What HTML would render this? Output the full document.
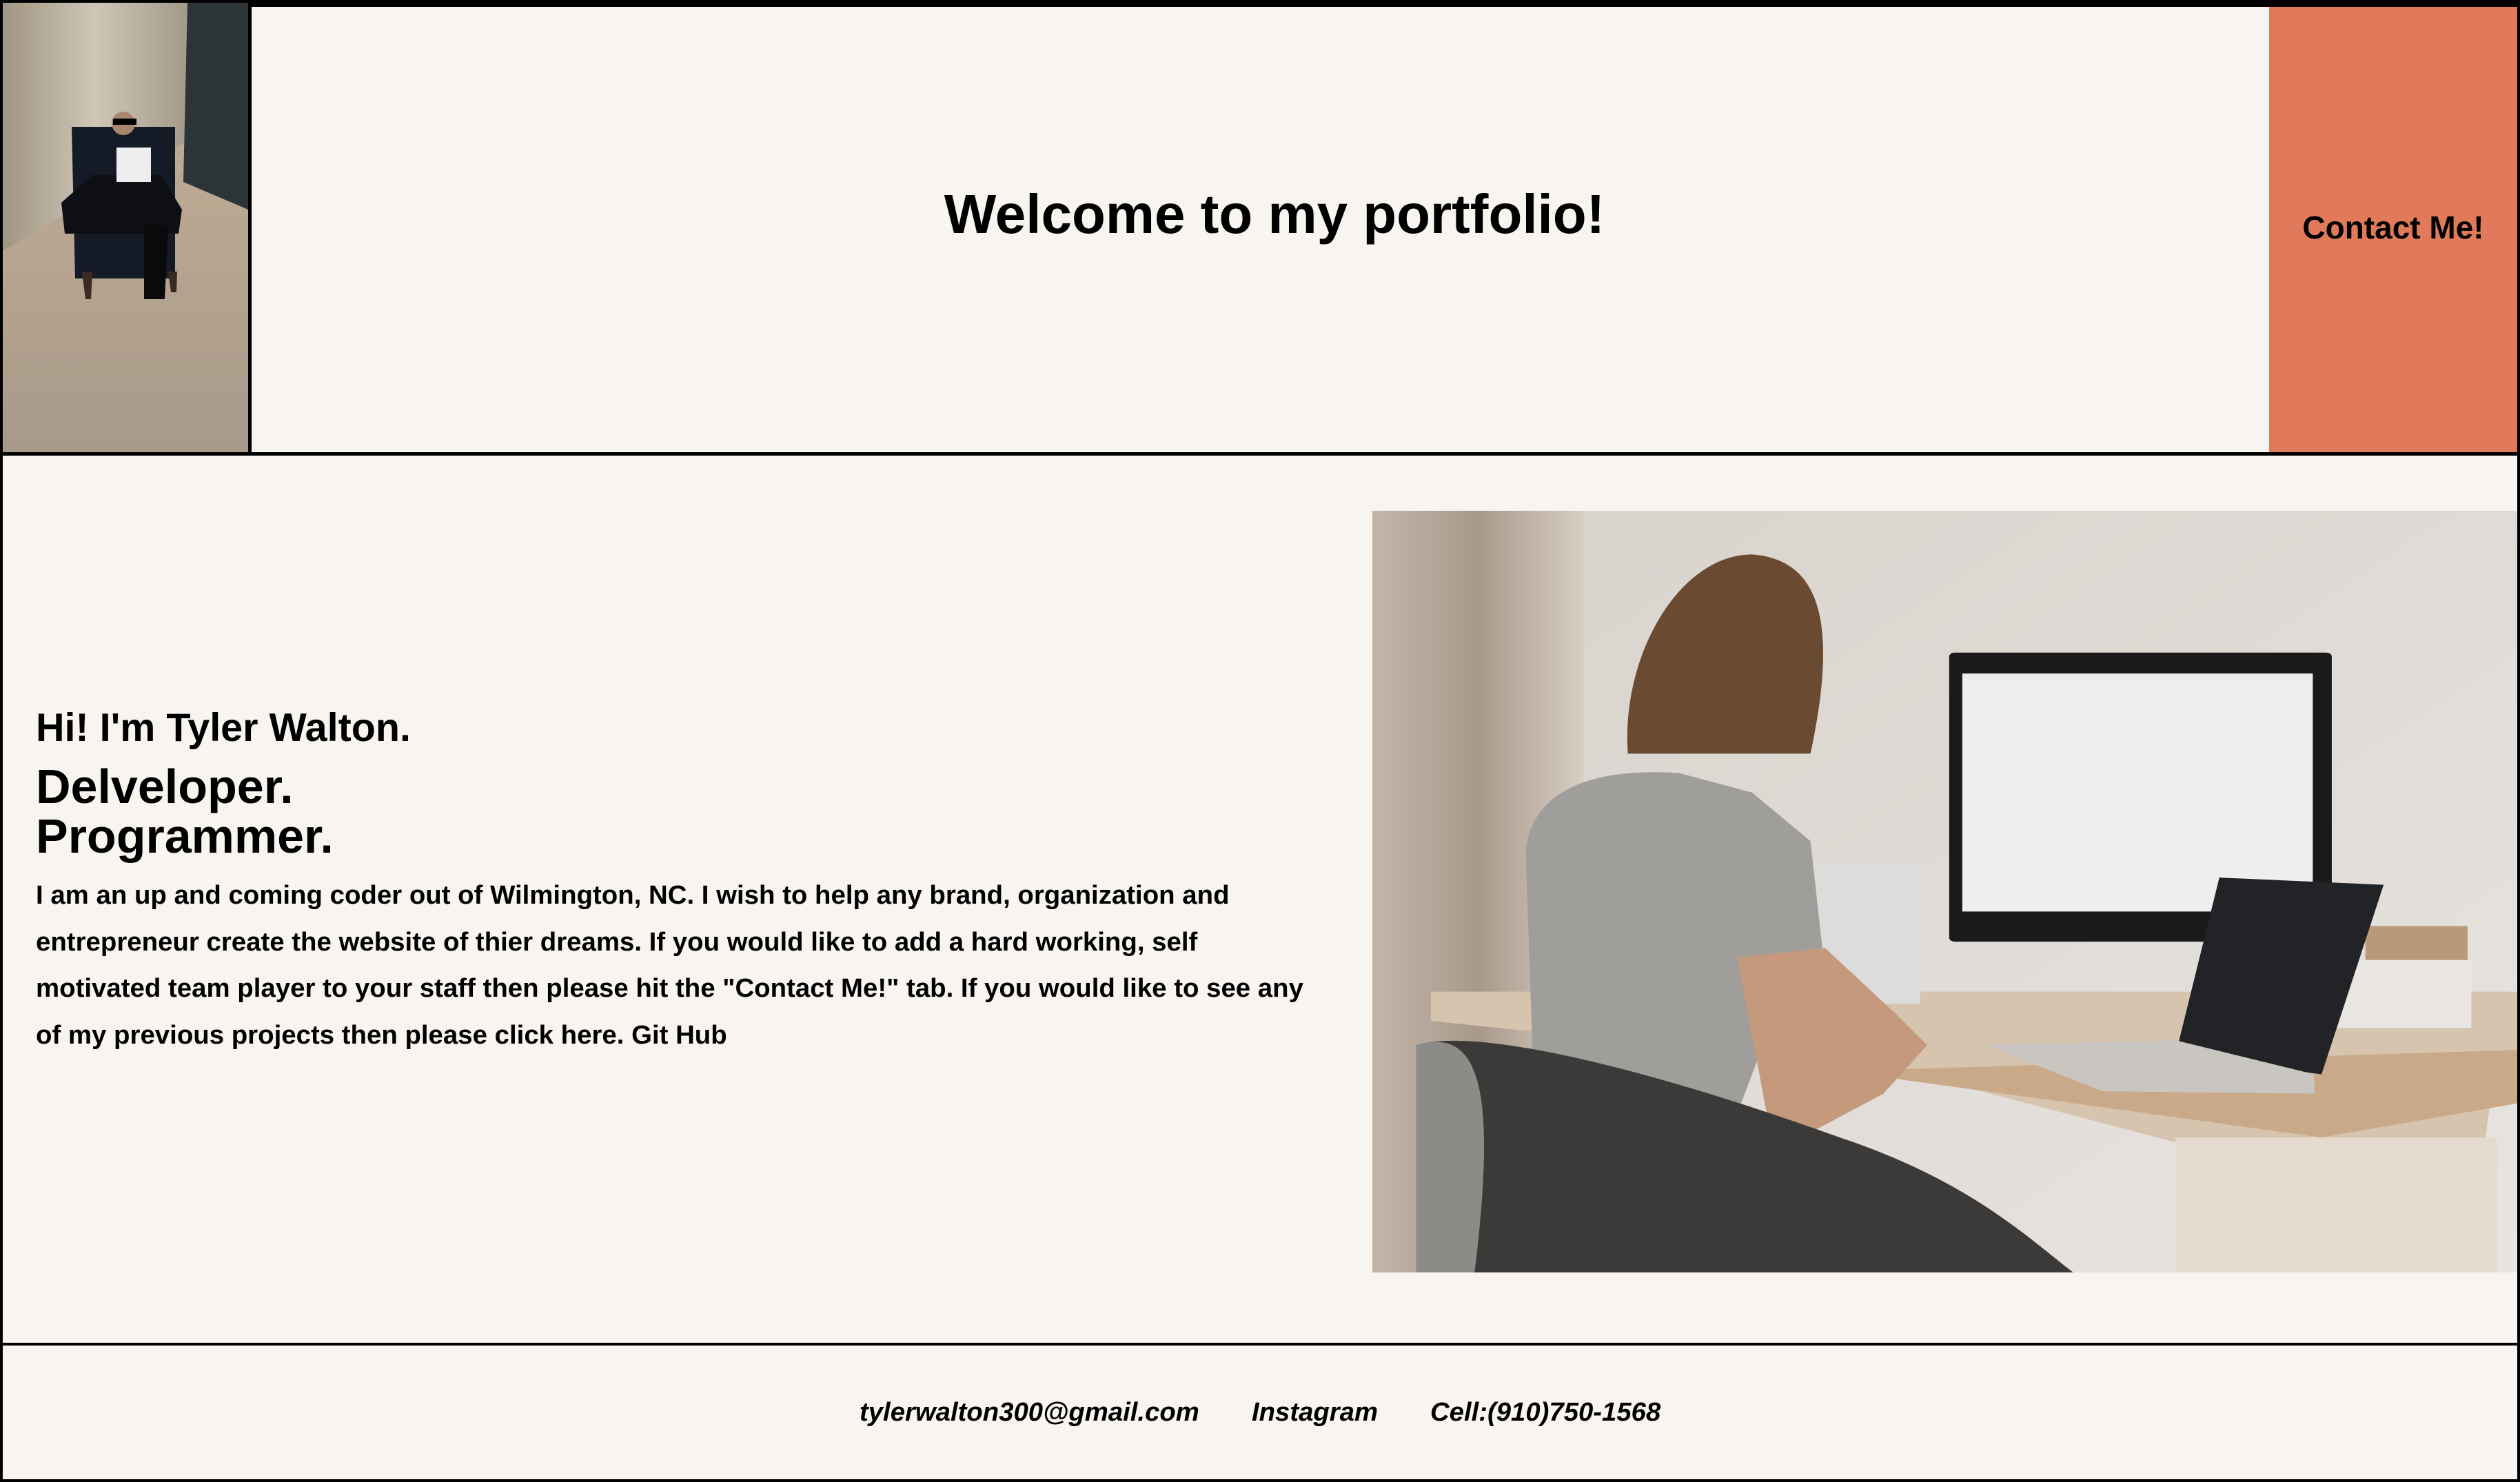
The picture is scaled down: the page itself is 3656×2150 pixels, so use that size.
<!DOCTYPE html>
<html><head><meta charset="utf-8"><style>
*{margin:0;padding:0;box-sizing:border-box}
body{width:3656px;height:2150px;background:#f8f4f0;position:relative;overflow:hidden;font-family:"Liberation Sans",Arial,sans-serif;font-weight:bold;color:#000}
.a{position:absolute}
.t{position:absolute;white-space:nowrap;line-height:1}
</style></head><body>
<div class="a" style="left:0;top:0;width:3656px;height:10px;background:#000"></div>
<div class="a" style="left:0;top:656px;width:3656px;height:5px;background:#000"></div>
<div class="a" style="left:0;top:1948px;width:3656px;height:4px;background:#000"></div>
<div class="a" style="left:0;top:2146px;width:3656px;height:4px;background:#000"></div>
<div class="a" style="left:0;top:0;width:4px;height:2150px;background:#000"></div>
<div class="a" style="left:3652px;top:0;width:4px;height:2150px;background:#000"></div>
<div class="a" style="left:360px;top:0;width:5px;height:660px;background:#000"></div>
<svg class="a" style="left:4px;top:4px" width="356" height="652" viewBox="0 0 356 652" preserveAspectRatio="none">
<defs><linearGradient id="w" x1="0" y1="0" x2="1" y2="0"><stop offset="0" stop-color="#a09582"/><stop offset=".5" stop-color="#cfc6b6"/><stop offset="1" stop-color="#a39a8a"/></linearGradient>
<linearGradient id="f" x1="0" y1="0" x2="0" y2="1"><stop offset="0" stop-color="#c8b397"/><stop offset="1" stop-color="#a8998a"/></linearGradient></defs>
<rect width="356" height="652" fill="url(#f)"/>
<path d="M0 0H268V200L0 360Z" fill="url(#w)"/>
<path d="M268 0H356V300L262 260Z" fill="#2c3438"/>
<path d="M100 180H250V400H105Z" fill="#141a26"/>
<path d="M85 290L130 250H230L260 300L255 335H90Z" fill="#0d0f14"/>
<path d="M165 210h50v50h-50z" fill="#eeeeee"/>
<circle cx="175" cy="175" r="17" fill="#a8866e"/>
<rect x="160" y="168" width="34" height="9" fill="#000"/>
<path d="M205 320L240 325L235 430H205Z" fill="#0a0a0a"/>
<path d="M115 390l5 40h8l2-40z M240 390l4 30h8l1-30z" fill="#3a2a22"/>
</svg>
<div class="t" style="left:0;width:3698px;text-align:center;top:271px;font-size:80px">Welcome to my portfolio!</div>
<div class="a" style="left:3292px;top:10px;width:360px;height:646px;background:#e07a5a"></div>
<div class="t" style="left:3292px;width:360px;text-align:center;top:307px;font-size:46px">Contact Me!</div>
<div class="t" style="left:52px;top:1028px;font-size:57.5px">Hi! I'm Tyler Walton.</div>
<div class="t" style="left:52px;top:1106px;font-size:70px">Delveloper.</div>
<div class="t" style="left:52px;top:1178px;font-size:70px">Programmer.</div>
<div class="a" style="left:52px;top:1265px;font-size:38.4px;line-height:67.6px;white-space:nowrap">I am an up and coming coder out of Wilmington, NC. I wish to help any brand, organization and<br>entrepreneur create the website of thier dreams. If you would like to add a hard working, self<br>motivated team player to your staff then please hit the "Contact Me!" tab. If you would like to see any<br>of my previous projects then please click here. Git Hub</div>
<svg class="a" style="left:1991px;top:741px" width="1661" height="1105" viewBox="0 0 1568 1568" preserveAspectRatio="none">
<defs><linearGradient id="wall" x1="0" y1="0" x2="1" y2="1"><stop offset="0" stop-color="#d8d2cc"/><stop offset="1" stop-color="#e8e4e0"/></linearGradient>
<linearGradient id="cur" x1="0" y1="0" x2="1" y2="0"><stop offset="0" stop-color="#c2b6aa"/><stop offset=".5" stop-color="#a8998a"/><stop offset="1" stop-color="#d8cec4"/></linearGradient></defs>
<rect width="1568" height="1568" fill="url(#wall)"/>
<rect width="290" height="1568" fill="url(#cur)"/>
<path d="M80 990H1568V1120L1530 1230L1500 1568H1120L1100 1300L720 1150L80 1050Z" fill="#d6c4ae"/>
<path d="M720 1150L1568 1110V1220L1300 1290L720 1170Z" fill="#c9a988"/>
<path d="M1100 1290h440v278h-440z" fill="#e4dacd"/>
<rect x="790" y="292" width="524" height="595" rx="8" fill="#1a1a1a"/>
<rect x="808" y="335" width="480" height="490" fill="#eeeeee"/>
<rect x="1360" y="855" width="140" height="70" fill="#b89a78"/>
<rect x="1320" y="925" width="185" height="140" fill="#e9e6e2"/>
<path d="M1160 755L1385 770L1300 1160L1100 1120Z" fill="#222326"/>
<path d="M840 1100L1100 1090L1290 1160L1290 1200L1000 1195Z" fill="#c9c6c2"/>
<rect x="610" y="725" width="140" height="290" fill="#dcdcdc"/>
<path d="M350 500C340 300 420 90 520 90C610 100 640 220 600 500Z" fill="#6a4a30"/>
<path d="M210 700C220 560 320 530 420 540L520 580L600 680L620 950L560 1000L500 1240L220 1150Z" fill="#a09e9a"/>
<path d="M500 920L620 900L720 1040L760 1100L700 1200L600 1280L540 1240Z" fill="#c59a7c"/>
<path d="M60 1100C150 1060 400 1160 640 1290C820 1380 900 1500 960 1568H60Z" fill="#3c3a38"/>
<path d="M60 1100C150 1060 170 1200 140 1568H60Z" fill="#8d8b88"/>
</svg>
<div class="t" style="left:1247px;top:2030px;font-size:38.3px;font-style:italic">tylerwalton300@gmail.com</div>
<div class="t" style="left:1816px;top:2030px;font-size:38.3px;font-style:italic">Instagram</div>
<div class="t" style="left:2075px;top:2030px;font-size:38.3px;font-style:italic">Cell:(910)750-1568</div>
</body></html>
